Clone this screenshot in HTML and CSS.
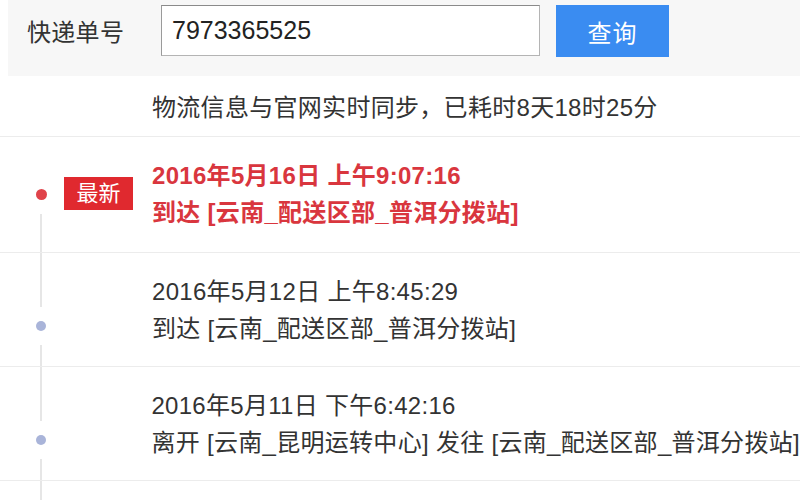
FILE: index.html
```html
<!DOCTYPE html>
<html lang="zh-CN">
<head>
<meta charset="utf-8">
<title>快递查询</title>
<link rel="stylesheet" href="styles.css">
</head>
<body>
<div class="search">
  <span class="label">快递单号</span>
  <div class="input">7973365525</div>
  <button class="btn">查询</button>
</div>
<div class="status">物流信息与官网实时同步，已耗时8天18时25分</div>
<div class="list">
  <div class="item latest">
    <div class="rail"><span class="dot"></span><span class="seg"></span></div>
    <div class="tag"><span class="badge">最新</span></div>
    <div class="text">
      <div>2016年5月16日 上午9:07:16</div>
      <div>到达 [云南_配送区部_普洱分拨站]</div>
    </div>
  </div>
  <div class="item">
    <div class="rail"><span class="seg top"></span><span class="dot"></span><span class="seg"></span></div>
    <div class="tag"></div>
    <div class="text">
      <div>2016年5月12日 上午8:45:29</div>
      <div>到达 [云南_配送区部_普洱分拨站]</div>
    </div>
  </div>
  <div class="item">
    <div class="rail"><span class="seg top"></span><span class="dot"></span><span class="seg"></span></div>
    <div class="tag"></div>
    <div class="text">
      <div>2016年5月11日 下午6:42:16</div>
      <div>离开 [云南_昆明运转中心] 发往 [云南_配送区部_普洱分拨站]</div>
    </div>
  </div>
  <div class="tail">
    <div class="rail"><span class="seg top"></span></div>
  </div>
</div>
</body>
</html>
```

FILE: styles.css
```css
html, body {
  margin: 0;
  padding: 0;
  background: #ffffff;
  overflow: hidden;
}
body {
  font-family: "Liberation Sans", "Noto Sans CJK SC", sans-serif;
  color: #333333;
  font-size: 24px;
  letter-spacing: 0.3px;
}
.search {
  margin-left: 8px;
  height: 76px;
  box-sizing: border-box;
  padding: 5px 0 0 19px;
  background: #f7f7f7;
  display: flex;
  align-items: flex-start;
}
.label {
  width: 134px;
  line-height: 56px;
  font-size: 24px;
  color: #333;
}
.input {
  width: 379px;
  height: 51px;
  box-sizing: border-box;
  border: 1px solid #b4b4b4;
  border-top-color: #8a8a8a;
  border-left-color: #9a9a9a;
  background: #fff;
  padding-left: 10px;
  font-size: 25px;
  letter-spacing: 0;
  line-height: 49px;
  color: #222;
}
.btn {
  margin-left: 16px;
  width: 113px;
  height: 52px;
  border: none;
  background: #3a8cf1;
  color: #fff;
  font-family: "Liberation Sans", "Noto Sans CJK SC", sans-serif;
  font-size: 24px;
  letter-spacing: 1px;
  padding: 0;
}
.status {
  height: 61px;
  box-sizing: border-box;
  padding: 20px 0 0 152px;
  line-height: 24px;
  border-bottom: 1px solid #ececec;
  color: #333;
}
.item {
  height: 114px;
  box-sizing: border-box;
  border-bottom: 1px solid #ececec;
  display: flex;
}
.item.latest {
  height: 116px;
}
.tail {
  height: 40px;
  display: flex;
}
.rail {
  width: 10px;
  padding-left: 36px;
  display: flex;
  flex-direction: column;
  align-items: center;
}
.latest .rail {
  padding-top: 52px;
}
.seg {
  width: 2px;
  flex: 1;
  background: #e6e6e6;
  margin-top: 14px;
}
.seg.top {
  flex: none;
  height: 54px;
  margin-top: 0;
}
.tail .seg.top {
  height: 40px;
}
.dot {
  width: 10px;
  height: 10px;
  border-radius: 50%;
  background: #a9b4d9;
  margin-top: 14px;
  flex: none;
}
.latest .dot {
  width: 11px;
  height: 11px;
  margin-top: 0;
  background: #e0434a;
}
.tag {
  width: 106px;
  padding-top: 40px;
}
.badge {
  display: block;
  margin-left: 18px;
  width: 69px;
  height: 33px;
  line-height: 33px;
  text-align: center;
  background: #e0292f;
  color: #fff;
  font-size: 22px;
  letter-spacing: 0;
}
.text {
  padding-top: 20px;
  line-height: 37px;
  white-space: nowrap;
  color: #333;
}
.latest .text {
  color: #d9363e;
  font-weight: bold;
}
```
